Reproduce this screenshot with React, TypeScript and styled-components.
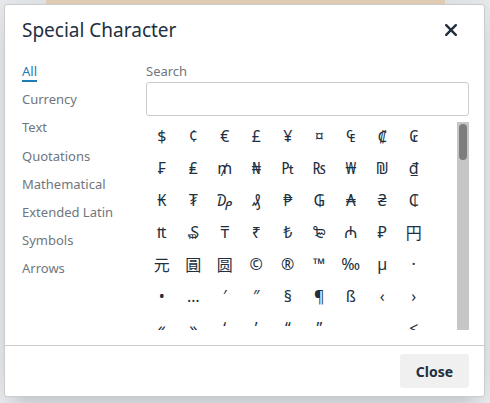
import React, { useState } from 'react';
import styled, { createGlobalStyle } from 'styled-components';

const GlobalStyle = createGlobalStyle`
    html, body {
        margin: 0;
        padding: 0;
    }
    body {
        font-family: 'Noto Sans', 'DejaVu Sans', 'Noto Sans CJK SC', sans-serif;
        color: #222f3e;
    }
`;

const Backdrop = styled.div`
    width: 490px;
    height: 403px;
    box-sizing: border-box;
    padding: 4px 5px 0 4px;
    background:
        linear-gradient(#eed8bb, #eed8bb) 46px 0 / 399px 5px no-repeat,
        #eceef0;
`;

const Dialog = styled.div`
    width: 481px;
    height: 393px;
    box-sizing: border-box;
    display: flex;
    flex-direction: column;
    background: #fff;
    border: 1px solid #cccccc;
    border-radius: 3px;
    box-shadow: 0 16px 16px -10px rgba(34, 47, 62, 0.15), 0 0 40px 1px rgba(34, 47, 62, 0.15);
`;

const Header = styled.div`
    display: flex;
    align-items: center;
    justify-content: space-between;
    padding: 12px 21px 0 17px;
`;

const Title = styled.h1`
    margin: 0;
    font-size: 19px;
    font-weight: 400;
    line-height: 26px;
    color: #222f3e;
`;

const CloseIcon = styled.button`
    display: flex;
    align-items: center;
    justify-content: center;
    width: 24px;
    height: 24px;
    padding: 0;
    border: 0;
    background: transparent;
    color: #222f3e;
    cursor: pointer;
`;

const Body = styled.div`
    flex: 1;
    min-height: 0;
    display: flex;
    padding: 19px 15px 15px 17px;
`;

const Nav = styled.nav`
    width: 124px;
    display: flex;
    flex-direction: column;
    align-items: flex-start;
`;

const NavItem = styled.div<{ $active?: boolean }>`
    font-size: 13px;
    line-height: 18px;
    margin-bottom: 8.2px;
    color: ${props => props.$active ? '#207ab7' : '#70767d'};
    border-bottom: 2px solid ${props => props.$active ? '#207ab7' : 'transparent'};
    cursor: pointer;
`;

const Content = styled.div`
    flex: 1;
    min-width: 0;
    display: flex;
    flex-direction: column;
`;

const Label = styled.label`
    font-size: 13px;
    line-height: 18px;
    color: #70767d;
    margin-bottom: 2px;
`;

const SearchInput = styled.input`
    height: 34px;
    box-sizing: border-box;
    border: 1px solid #cccccc;
    border-radius: 3px;
    padding: 5px 8px;
    font-size: 16px;
    font-family: inherit;
    outline: none;
`;

const Scroller = styled.div`
    margin-top: 6px;
    flex: 1;
    min-height: 0;
    display: flex;
`;

const Viewport = styled.div`
    flex: 1;
    min-width: 0;
    overflow: hidden;
`;

const Track = styled.div`
    width: 12px;
    background: #c6c6c6;
    padding: 2px;
    box-sizing: border-box;
`;

const Thumb = styled.div`
    height: 36px;
    border-radius: 4px;
    background: #7d7d7d;
`;

const Grid = styled.div`
    display: grid;
    grid-template-columns: repeat(9, 31.5px);
    grid-auto-rows: 32px;
`;

const Char = styled.div`
    display: flex;
    align-items: center;
    justify-content: center;
    padding-bottom: 4px;
    box-sizing: border-box;
    font-size: 16px;
    color: #222f3e;
    font-family: 'Noto Sans', 'DejaVu Sans', 'Noto Sans CJK SC', sans-serif;
    cursor: pointer;
`;

const Footer = styled.div`
    display: flex;
    justify-content: flex-end;
    border-top: 1px solid #cccccc;
    padding: 8px 15px;
`;

const FooterButton = styled.button`
    height: 34px;
    width: 69px;
    border: 0;
    border-radius: 3px;
    background: #f0f0f0;
    color: #222f3e;
    font-family: inherit;
    font-size: 14px;
    font-weight: 700;
    cursor: pointer;
`;

const categories = ['All', 'Currency', 'Text', 'Quotations', 'Mathematical', 'Extended Latin', 'Symbols', 'Arrows'];

const chars = Array.from(
    '$¢€£¥¤₠₡₢₣₤₥₦₧₨₩₪₫₭₮₯₰₱₲₳₴₵₶₷₸₹₺₻₼₽円元圓圆' +
    '©®™‰µ·•…′″§¶ß' +
    '‹›«»‘’“”‚„<>≤≥–—¯‾¤¦¨¡¿ˆ˜°−±÷⁄×¹²³¼½¾' +
    'ƒ∫∑∞√∼≅≈≠≡∈∉∋∏∧∨¬∩∪∂∀∃∅∇∗∝∠' +
    'ÀÁÂÃÄÅĀÆÇÈÉÊËĒÌÍÎÏĪÐÑÒÓÔÕÖØŌŒŠÙÚÛÜŪÝŸȲÞ' +
    'àáâãäåāæçèéêëēìíîïīðñòóôõöøōœšùúûüūýþÿȳ' +
    'ΑΒΓΔΕΖΗΘΙΚΛΜΝΞΟΠΡΣΤΥΦΧΨΩαβγδεζηθικλμνξοπρςστυφχψω' +
    'ℵϖℜϑ℘ℑ◊♠♣♥♦' +
    '←↑→↓↔↵⇐⇑⇒⇓⇔∴⊂⊃⊄⊆⊇⊕⊗⊥⋅⌈⌉⌊⌋〈〉'
);

const App: React.FC = () => {
    const [active, setActive] = useState('All');
    const [query, setQuery] = useState('');

    return (
        <>
            <GlobalStyle />
            <Backdrop>
                <Dialog>
                    <Header>
                        <Title>Special Character</Title>
                        <CloseIcon aria-label="Close">
                            <svg width="12" height="12" viewBox="0 0 12 12">
                                <path d="M1.2 1.2 L10.8 10.8 M10.8 1.2 L1.2 10.8" stroke="currentColor" strokeWidth="2.4" strokeLinecap="round" />
                            </svg>
                        </CloseIcon>
                    </Header>
                    <Body>
                        <Nav>
                            {categories.map(c => (
                                <NavItem key={c} $active={c === active} onClick={() => setActive(c)}>
                                    {c}
                                </NavItem>
                            ))}
                        </Nav>
                        <Content>
                            <Label>Search</Label>
                            <SearchInput value={query} onChange={e => setQuery(e.target.value)} />
                            <Scroller>
                                <Viewport>
                                    <Grid>
                                        {chars.map((ch, i) => (
                                            <Char key={i}>{ch}</Char>
                                        ))}
                                    </Grid>
                                </Viewport>
                                <Track>
                                    <Thumb />
                                </Track>
                            </Scroller>
                        </Content>
                    </Body>
                    <Footer>
                        <FooterButton>Close</FooterButton>
                    </Footer>
                </Dialog>
            </Backdrop>
        </>
    );
};

export default App;
